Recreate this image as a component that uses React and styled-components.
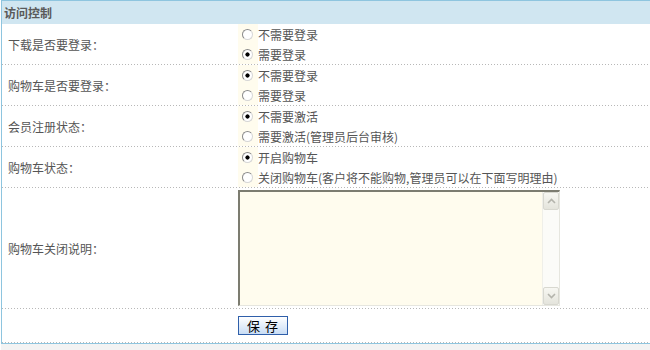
import React from 'react';
import styled, { createGlobalStyle } from "styled-components";

const GlobalStyle = createGlobalStyle`
html, body {
  margin: 0;
  padding: 0;
  background: #fff;
  overflow: hidden;
}
body {
  font-family: "Noto Sans CJK SC", "Liberation Sans", sans-serif;
  font-size: 12px;
  color: #555;
}
`;

const rows = [
  { label: "下载是否要登录：", name: "down", options: ["不需要登录", "需要登录"], checked: 1 },
  { label: "购物车是否要登录：", name: "cart", options: ["不需要登录", "需要登录"], checked: 0 },
  { label: "会员注册状态：", name: "reg", options: ["不需要激活", "需要激活(管理员后台审核)"], checked: 0 },
  { label: "购物车状态：", name: "state", options: ["开启购物车", "关闭购物车(客户将不能购物,管理员可以在下面写明理由)"], checked: 0 },
];

const Chevron = ({ up }) => (
  <svg width="9" height="6" viewBox="0 0 9 6">
    <path d={up ? "M1 5 L4.5 1.5 L8 5" : "M1 1 L4.5 4.5 L8 1"} fill="none" stroke="#b4b4ac" strokeWidth="1.6" />
  </svg>
);

function App() {
  return (
    <>
      <GlobalStyle />
      <Page>
        <Panel>
          <Header>访问控制</Header>
          {rows.map((r) => (
            <Row key={r.name} height={40}>
              <Label>{r.label}</Label>
              <Options>
                {r.options.map((o, i) => (
                  <Option key={o}>
                    <RadioBox>
                      <Radio type="radio" name={r.name} defaultChecked={i === r.checked} />
                    </RadioBox>
                    {o}
                  </Option>
                ))}
              </Options>
            </Row>
          ))}
          <Row height={120}>
            <Label>购物车关闭说明：</Label>
            <Field>
              <TextBox>
                <Textarea />
                <ScrollBar>
                  <ScrollButton><Chevron up /></ScrollButton>
                  <ScrollButton><Chevron /></ScrollButton>
                </ScrollBar>
              </TextBox>
            </Field>
          </Row>
          <Row height={33}>
            <Label />
            <Field>
              <SaveButton>保&nbsp;存</SaveButton>
            </Field>
          </Row>
        </Panel>
        <Footer />
      </Page>
    </>
  );
}

const Page = styled.div`
padding-left: 1px;
`;

const Panel = styled.div`
border-top: 1px solid #8ec5df;
border-left: 1px solid #8ec5df;
border-bottom: 1px solid #8ec5df;
`;

const Header = styled.div`
height: 23px;
line-height: 23px;
padding-left: 2px;
background: #d0e6f1;
color: #5a5a5a;
font-weight: bold;
font-size: 12px;
`;

const Row = styled.div`
display: grid;
grid-template-columns: 236px 1fr;
height: ${(p) => p.height}px;
padding-bottom: 1px;
background: linear-gradient(to right, #b8b8b8 1px, transparent 1px) left bottom / 3px 1px repeat-x;
`;

const Label = styled.div`
display: flex;
align-items: center;
padding-left: 6px;
color: #555;
`;

const Options = styled.div`
display: flex;
flex-direction: column;
`;

const Option = styled.label`
display: flex;
align-items: center;
height: 20px;
color: #555;
white-space: nowrap;
`;

const RadioBox = styled.span`
display: flex;
align-items: center;
justify-content: center;
width: 20px;
height: 20px;
background: #fffcee;
`;

const Radio = styled.input`
appearance: none;
-webkit-appearance: none;
margin: 0 1px 0 0;
width: 11px;
height: 11px;
border-radius: 50%;
border: 1px solid;
border-color: #8a8a8a #d6d6d6 #d6d6d6 #8a8a8a;
background: #fff;
&:checked {
  background: radial-gradient(circle, #000 0 1.8px, #fff 2.4px);
}
`;

const Field = styled.div`
display: flex;
align-items: center;
`;

const TextBox = styled.div`
box-sizing: border-box;
display: flex;
width: 322px;
height: 116px;
border: 2px solid;
border-right-width: 1px;
border-bottom-width: 1px;
border-color: #7c7c70 #e6e6df #e6e6df #7c7c70;
background: #fffcee;
`;

const Textarea = styled.textarea`
flex: 1;
margin: 0;
padding: 2px;
border: none;
outline: none;
background: transparent;
resize: none;
font: inherit;
`;

const ScrollBar = styled.div`
display: flex;
flex-direction: column;
justify-content: space-between;
width: 16px;
background: #fbfbf8;
border-left: 1px solid #efefe9;
`;

const ScrollButton = styled.div`
display: flex;
align-items: center;
justify-content: center;
height: 16px;
border: 1px solid #d8d8d0;
border-radius: 2px;
background: linear-gradient(#f7f7f2, #e4e4dc);
`;

const SaveButton = styled.button`
box-sizing: border-box;
width: 50px;
height: 19px;
padding: 0;
border: 1px solid #2f5faa;
background: linear-gradient(#ffffff, #c9ddf5);
color: #000;
font-family: "Noto Sans CJK SC", "Liberation Sans", sans-serif;
font-size: 13px;
line-height: 17px;
letter-spacing: 1px;
`;

const Footer = styled.div`
height: 8px;
background: #f3f3f3;
`;

export default App
